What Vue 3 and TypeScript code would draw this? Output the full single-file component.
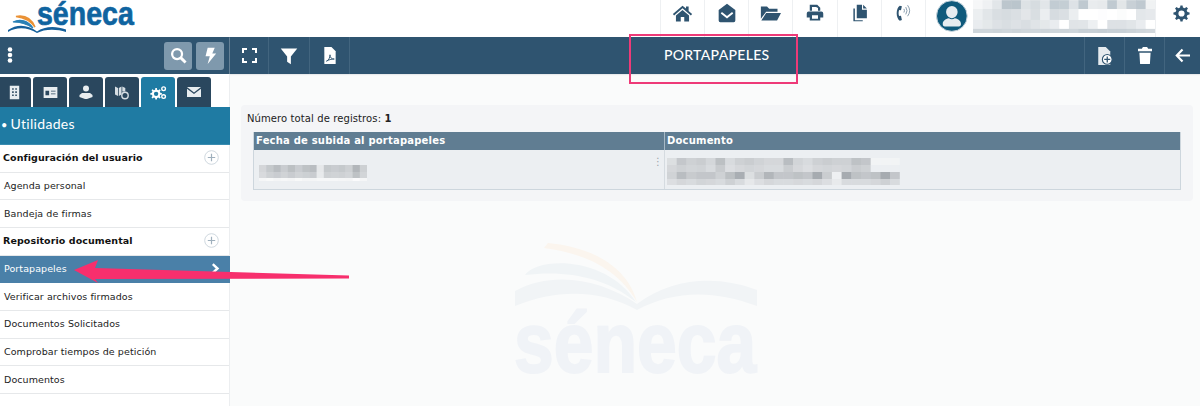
<script setup lang="ts">
interface Rect { x: number; y: number; w: number; h: number; fill: string }

function gear(cx: number, cy: number, ro: number, ri: number, teeth: number): string {
  const pts: string[] = []
  const step = (Math.PI * 2) / teeth
  for (let i = 0; i < teeth; i++) {
    const a = i * step
    const offs: [number, number][] = [[-0.3, ri], [-0.17, ro], [0.17, ro], [0.3, ri]]
    for (const [o, r] of offs) {
      const t = a + o * step
      pts.push(`${(cx + r * Math.cos(t)).toFixed(2)} ${(cy + r * Math.sin(t)).toFixed(2)}`)
    }
  }
  const hole = ro * 0.38
  return `M${pts.join('L')}Z M${cx - hole} ${cy}a${hole} ${hole} 0 1 0 ${hole * 2} 0a${hole} ${hole} 0 1 0 ${-hole * 2} 0Z`
}

function mosaic(rows: string[][], cellW: number, heights: number[]): Rect[] {
  const out: Rect[] = []
  let y = 0
  rows.forEach((row, r) => {
    row.forEach((c, i) => out.push({ x: i * cellW, y, w: cellW + 0.5, h: heights[r] + 0.5, fill: '#' + c }))
    y += heights[r]
  })
  return out
}

const headerIcons: { d: string; w: number }[] = [
  { w: 21, d: 'M12 3 1 12.500l1.400 1.700L12 6l9.600 8.200 1.400-1.700L19 9V4h-3v2.400Z M12 8 4.500 14.400V21H10v-5h4v5h5.500v-6.600Z' },
  { w: 20, d: 'M12 1 2 8.500V21a2 2 0 0 0 2 2h16a2 2 0 0 0 2-2V8.500Z M12 18.500 4.500 12.500l1.400-1.800L12 15.500l6.100-4.800 1.400 1.800Z' },
  { w: 21, d: 'M1 4h7l2.500 2.500H20V10H7L1 18Z M7 11.500h17L19.500 20H1.500Z' },
  { w: 18, d: 'M5 1h10l4 4v4h-3V5h-1.500L14 4H8v5H5Z M3.500 10h17A2.500 2.500 0 0 1 23 12.500V18h-4v4H5v-4H1v-5.500A2.500 2.500 0 0 1 3.500 10Z M8 15v4.500h8V15Z' },
  { w: 18, d: 'M9 1h7v6.500h6.500V19H9Z M17.500 1l5 5h-5Z M6.500 6v15.500H17V23H4.500V6Z' },
]

const userRows = [
  ['f6f7f8', 'eff1f3', 'e2e6e9', 'bcc6cd', 'bac5cc', 'dde2e5', 'd6dce0', 'e2e6e9', 'c2ccd3', 'c4ced4', 'dde2e6', 'bfc9d0', 'e9ecee', 'e7eaec', 'c0cad1', 'e2e6e8', 'c8d0d6', 'bfc9d0', 'f0f2f3'],
  ['eceff1', 'e2e6e9', 'd9dee2', 'd6dce0', 'dadfe3', 'e3e6e9', 'd9dee2', 'ebeef0', 'd6dce0', 'dadfe3', 'ebeef0', 'ffffff', 'ffffff', 'fdfdfe', 'ffffff', 'fbfcfc', 'ffffff', 'e3e7ea', 'e6e9ec'],
  ['e9ecef', 'e4e8ea', 'dde1e5', 'd9dee2', 'dde1e5', 'd9dee2', 'e0e4e7', 'e4e8ea', 'e9ecef', 'ffffff', 'e0e4e7', 'e1e5e8', 'edf0f2', 'ffffff', 'dde1e5', 'dde1e5', 'e1e5e8', 'e9ecef', 'ffffff'],
  ['cfd6db', 'cfd6db', 'cdd4d9', 'cfd6db', 'cdd4d9', 'cfd6db', 'cfd6db', 'cdd4d9', 'cfd6db', 'cdd4d9', 'cfd6db', 'c8d0d6', 'c8d0d6', 'c6ced4', 'c8d0d6', 'c8d0d6', 'ccd3d8', 'cfd6db', 'd2d8dd'],
]
const userCells = mosaic(userRows, 9.68, [9, 11, 9, 4])

const dateRows = [
  ['d4d6d9', 'c5c9cc', 'b9bdc1', 'c9ccd0', 'bcc0c3', 'c9ccd0', 'bec2c5', 'b9bdc1', 'e6e8ea', 'c5c9cc', 'c9ccd0', 'c5c9cc', 'cdd0d3', 'b2b6ba', 'cdd0d3'],
  ['d8dadd', 'ced1d4', 'c9ccd0', 'd0d3d6', 'c9ccd0', 'd0d3d6', 'ccd0d3', 'c9ccd0', 'e8eaec', 'ced1d4', 'd0d3d6', 'ced1d4', 'd2d5d8', 'bec2c5', 'd2d5d8'],
  ['f5f6f7', 'f8f9f9', 'f4f5f6', 'f6f7f8', 'f4f5f6', 'f8f9f9', 'f4f5f6', 'f4f5f6', 'f6f7f8', 'f6f7f8', 'f6f7f8', 'f5f6f7', 'f4f5f6', 'fbfbfc', 'f5f6f7'],
]
const dateCells = mosaic(dateRows, 7.2, [7, 6, 3])

const docRows = [
  ['dcdfe1', 'c4c7cb', 'ced1d4', 'cacdd0', 'd4d7da', 'bcc0c3', 'd8dbde', 'ced1d4', 'cacdd0', 'd0d3d6', 'd5d7da', 'd5d7da', 'b9bdc1', 'd2d5d8', 'd8dbde', 'ced1d4', 'cacdd0', 'ced1d4', 'ced1d4', 'bec2c5', 'c3c6ca', 'f2f4f5', 'f2f4f5', 'f2f4f5', 'eceff2'],
  ['d5d7da', 'ced1d4', 'd2d5d8', 'd0d3d6', 'd8dbde', 'c8cbce', 'dcdee1', 'd6d8db', 'd2d5d8', 'd5d7da', 'd8dbde', 'd8dbde', 'cacdd0', 'd6d8db', 'dcdee1', 'd5d7da', 'd2d5d8', 'd5d7da', 'd2d5d8', 'cacdd0', 'ced1d4', 'eceff2', 'eceff2', 'eceff2', 'eceff2'],
  ['d0d3d6', 'b9bdc1', 'c8cbce', 'c3c6ca', 'c3c6ca', 'ced1d4', 'bcc0c3', 'a9aeb3', 'dcdfe1', 'cacdd0', 'b2b6ba', 'c3c6ca', 'c3c6ca', 'bec2c5', 'c3c6ca', 'a6abb0', 'cacdd0', 'eef0f2', 'a6abb0', 'bec2c5', 'c3c6ca', 'bec2c5', 'a6abb0', 'c3c6ca', 'eceff2'],
  ['dcdee1', 'd5d7da', 'd8dbde', 'd2d5d8', 'd5d7da', 'd8dbde', 'ced1d4', 'd8dbde', 'e6e8ea', 'dcdee1', 'd5d7da', 'd8dbde', 'd8dbde', 'd6d8db', 'd8dbde', 'd5d7da', 'dcdee1', 'e8eaec', 'd8dbde', 'd8dbde', 'd8dbde', 'd5d7da', 'ced1d4', 'd8dbde', 'eceff2'],
]
const docCells = mosaic(docRows, 9.7, [7, 7, 7, 6])

const tabs = [0, 1, 2, 3, 4, 5]

interface MenuItem { label: string; section?: boolean; active?: boolean }
const menu: MenuItem[] = [
  { label: 'Configuración del usuario', section: true },
  { label: 'Agenda personal' },
  { label: 'Bandeja de firmas' },
  { label: 'Repositorio documental', section: true },
  { label: 'Portapapeles', active: true },
  { label: 'Verificar archivos firmados' },
  { label: 'Documentos Solicitados' },
  { label: 'Comprobar tiempos de petición' },
  { label: 'Documentos' },
]

const gearTop = gear(12, 12, 11.5, 8.6, 8)
const cogBig = gear(8.5, 13, 8.500, 6.300, 8)
</script>

<template>
  <div class="page">
    <header class="header">
      <svg class="logo" width="140" height="37" viewBox="0 0 140 37">
        <path d="M16 16.500C24 15 31 18 35 27 30 20 24 17.500 16 16.500Z" fill="#ea9134" stroke="#ea9134" stroke-width="1.500" />
        <path d="M13 22C20 18.500 28 20.500 33 28 27 24 20 22 13 22Z" fill="#2a80b5" stroke="#2a80b5" stroke-width="1.200" />
        <path d="M8 30C17 23.500 28 24.500 37 31.500 44 26 56 25.500 66 29.500V32C56 28.500 44 29 37 33 28 27.500 17 26.500 8 32Z" fill="#15609b" />
        <text transform="translate(37 24.500) scale(.84 1)" class="logo-text">séneca</text>
      </svg>
      <div class="head-spacer"></div>
      <div class="head-btn" v-for="(ic, i) in headerIcons" :key="i">
        <svg :width="ic.w" :height="ic.w" viewBox="0 0 24 24" fill="#2f5470"><path :d="ic.d" fill-rule="evenodd" /></svg>
      </div>
      <div class="head-btn">
        <svg width="22" height="22" viewBox="0 0 24 24" fill="none">
          <path d="M8.500 4C4 7 4 17 8.500 20.500l2.300-1-1-4.500-2 .4C7 13.500 7 10.500 7.800 8.600l2 .4 1-4.500Z" fill="#2f5470" />
          <path d="M13 7.500a4 4 0 0 1 0 4M15 5.500a7 7 0 0 1 0 8M17 3.500a10 10 0 0 1 0 12" stroke="#7f95a6" stroke-width="1" />
        </svg>
      </div>
      <div class="user">
        <svg class="avatar" width="32" height="33" viewBox="0 0 32 33">
          <circle cx="16" cy="16" r="15.500" fill="#0f5a7c" stroke="#c5d3dc" stroke-width="1" />
          <path d="M16 6a5.800 5.800 0 0 1 5.800 5.800c0 3.700-2.600 6.400-5.800 6.400s-5.800-2.700-5.800-6.400A5.800 5.800 0 0 1 16 6Z" fill="#e6ecf0" />
          <path d="M9 26.500c-1.500 0-2.200-1-2.200-2.500 0-3 2.700-5.200 6.200-5.700 1.800 1.300 4.200 1.300 6 0 3.500.5 6.200 2.700 6.200 5.700 0 1.500-.7 2.500-2.200 2.500Z" fill="#e6ecf0" />
        </svg>
        <svg class="user-blur" width="184" height="33" viewBox="0 0 184 33">
          <rect v-for="(c, i) in userCells" :key="i" :x="c.x" :y="c.y" :width="c.w" :height="c.h" :fill="c.fill" />
        </svg>
      </div>
      <div class="head-gear">
        <svg width="17" height="17" viewBox="0 0 24 24" fill="#2f5470"><path :d="gearTop" fill-rule="evenodd" /></svg>
      </div>
    </header>

    <div class="workspace">
      <aside class="sidebar">
        <div class="side-bar">
          <svg class="dots" width="6" height="16" viewBox="0 0 6 16" fill="#fff">
            <circle cx="3" cy="2.500" r="2.300" /><circle cx="3" cy="8" r="2.300" /><circle cx="3" cy="13.500" r="2.300" />
          </svg>
          <div class="side-actions">
            <div class="side-action">
              <svg width="17" height="17" viewBox="0 0 24 24" fill="none" stroke="#fff"><circle cx="10" cy="10" r="7" stroke-width="3.200" /><path d="M15 15l7 7" stroke-width="4" /></svg>
            </div>
            <div class="side-action">
              <svg width="17" height="19" viewBox="0 0 24 24" fill="#fff"><path d="M8 1h10l-3.500 8H20L8 24l3-11H5Z" /></svg>
            </div>
          </div>
        </div>

        <nav class="tabs">
          <div class="tab" v-for="t in tabs" :key="t" :class="{ on: t === 4 }">
            <svg v-if="t === 0" width="11" height="15" viewBox="0 0 14 17" fill="#e8edf0">
              <path fill-rule="evenodd" d="M1 0h12v17H1Z M4 3v2h2V3Z M8 3v2h2V3Z M4 7v2h2V7Z M8 7v2h2V7Z M4 11v2h2v-2Z M8 11v2h2v-2Z" />
            </svg>
            <svg v-else-if="t === 1" width="15" height="11" viewBox="0 0 15 12" fill="#e8edf0">
              <path fill-rule="evenodd" d="M0 0h15v12H0Z M2 4v5h4V4Z M8 4v1h5V4Z M8 7v1h5V7Z" />
            </svg>
            <svg v-else-if="t === 2" width="14" height="14" viewBox="0 0 14 14" fill="#e8edf0">
              <circle cx="7" cy="3.500" r="3" /><path d="M3 8h8l2.500 2v2L8 14H6L.5 12v-2Z" />
            </svg>
            <svg v-else-if="t === 3" width="14" height="15" viewBox="0 0 14 14">
              <path d="M0 1l3 1.500v8L0 9Z M3.800 2.500 6.500 1v8L3.800 10.500Z M7.300 1l3 1.500V6H7.300Z" fill="#d5dde3" />
              <circle cx="10" cy="10" r="3.200" fill="none" stroke="#d5dde3" stroke-width="1.400" />
            </svg>
            <svg v-else-if="t === 4" width="17" height="15" viewBox="0 0 24 22" fill="#fff">
              <path :d="cogBig" fill-rule="evenodd" />
              <circle cx="19.500" cy="5.500" r="2.700" fill="none" stroke="#fff" stroke-width="2" />
              <circle cx="19.500" cy="17" r="2.700" fill="none" stroke="#fff" stroke-width="2" />
            </svg>
            <svg v-else width="14" height="10" viewBox="0 0 14 10" fill="#e8edf0">
              <path d="M0 0h14L7 5.500Z M0 1.800 7 7l7-5.200V10H0Z" />
            </svg>
          </div>
        </nav>

        <div class="section-title"><span class="bullet">•</span> Utilidades</div>

        <ul class="menu">
          <li v-for="m in menu" :key="m.label" :class="{ section: m.section, active: m.active }">
            <span>{{ m.label }}</span>
            <svg v-if="m.section" class="plus" width="15" height="15" viewBox="0 0 15 15" fill="none">
              <circle cx="7.500" cy="7.500" r="6.800" stroke="#cfd8df" stroke-width="1" />
              <path d="M7.500 3.800v7.400M3.800 7.500h7.400" stroke="#9fb0bd" stroke-width="1.200" />
            </svg>
            <svg v-if="m.active" class="chev" width="9" height="11" viewBox="0 0 9 11" fill="none">
              <path d="M1.800 1.200 6.500 5.500 1.800 9.800" stroke="#fff" stroke-width="2.400" />
            </svg>
          </li>
        </ul>
      </aside>

      <div class="content">
        <div class="toolbar">
          <div class="tool-group">
            <div class="tool">
              <svg width="15" height="15" viewBox="0 0 15 15" fill="none" stroke="#fff" stroke-width="2">
                <path d="M1 5V1h4M10 1h4v4M14 10v4h-4M5 14H1v-4" />
              </svg>
            </div>
            <div class="tool wide">
              <svg width="18" height="18" viewBox="0 0 24 24" fill="#fff"><path d="M1 2h22l-8.500 10.500V23l-5-3.500v-7Z" /></svg>
            </div>
            <div class="tool wide">
              <svg width="14" height="17" viewBox="0 0 18 24">
                <path d="M1 0h10l6 6v18H1Z" fill="#fff" />
                <path d="M4 20c3-1 5-5 5-9 0 4 2 6 6 6-4 0-8 1-11 3Z" fill="none" stroke="#2f5470" stroke-width="1.300" />
              </svg>
            </div>
          </div>
          <h1 class="page-title">PORTAPAPELES</h1>
          <div class="tool-group">
            <div class="tool line">
              <svg width="16" height="18" viewBox="0 0 20 24">
                <path d="M1 0h10l6 6v18H1Z" fill="#e6ebef" />
                <circle cx="13" cy="16.500" r="6.500" fill="#fff" stroke="#2f5470" stroke-width="1.500" />
                <path d="M13 12.500v8M9 16.500h8" stroke="#2f5470" stroke-width="1.700" />
              </svg>
            </div>
            <div class="tool line">
              <svg width="14" height="17" viewBox="0 0 20 24" fill="#fff"><path d="M7 0h6l1.500 2.500H20V6H0V2.500h5.500Z M2 8h16l-1 16H3Z" /></svg>
            </div>
            <div class="tool line last">
              <svg width="15" height="15" viewBox="0 0 15 15" fill="none" stroke="#fff" stroke-width="2.200">
                <path d="M7.500 1.500 1.800 7.500l5.700 6M2 7.500h13" />
              </svg>
            </div>
          </div>
        </div>

        <main class="main">
          <section class="panel">
            <p class="total">Número total de registros: <b>1</b></p>
            <div class="table">
              <div class="thead">
                <div class="th first">Fecha de subida al portapapeles</div>
                <div class="th">Documento</div>
              </div>
              <div class="tbody">
                <div class="td first">
                  <svg class="date-blur" width="108" height="16" viewBox="0 0 108 16">
                    <rect v-for="(c, i) in dateCells" :key="i" :x="c.x" :y="c.y" :width="c.w" :height="c.h" :fill="c.fill" />
                  </svg>
                  <span class="grip">⋮</span>
                </div>
                <div class="td">
                  <svg class="doc-blur" width="242" height="27" viewBox="0 0 242 27">
                    <rect v-for="(c, i) in docCells" :key="i" :x="c.x" :y="c.y" :width="c.w" :height="c.h" :fill="c.fill" />
                  </svg>
                </div>
              </div>
            </div>
          </section>

          <svg class="watermark" width="246" height="156" viewBox="0 0 246 156">
            <path d="M34 3C70 6 112 22 123 62 104 30 74 14 30 8Z" fill="#fbf5ee" />
            <path d="M11 35C22 18 90 14 122 62 90 36 50 30 11 35Z" fill="#f0f4f6" />
            <path d="M1 51C40 30 88 40 123 64 160 36 206 36 243 50V66C200 50 160 50 123 70 88 50 44 48 1 66Z" fill="#f1f4f6" />
            <text transform="translate(0 132) scale(.84 1)" class="wm-text">séneca</text>
          </svg>
        </main>
      </div>
    </div>

    <div class="callout"></div>
    <svg class="arrow" width="290" height="30" viewBox="0 0 290 30">
      <path d="M2 14 26 4 23 12 277 19.500V22.500L23 23 26 27Z" fill="#f72f6d" />
    </svg>
  </div>
</template>

<style scoped>
.page {
  position: relative;
  width: 1200px;
  height: 406px;
  overflow: hidden;
  background: #fff;
  font-family: "DejaVu Sans", sans-serif;
  color: #1c1c1c;
}
.header {
  display: flex;
  height: 37px;
  background: #fff;
}
.logo { flex: none; overflow: visible; }
.head-spacer { flex: 1; }
.head-btn {
  width: 44.200px;
  display: flex;
  align-items: center;
  justify-content: center;
  padding-bottom: 11px;
  box-sizing: border-box;
  border-left: 1px solid #eef0f2;
}
.user {
  width: 231px;
  box-sizing: border-box;
  display: flex;
  align-items: flex-start;
  border-left: 1px solid #eef0f2;
  border-right: 1px solid #eef0f2;
  padding-left: 10px;
}
.user-blur { margin-left: 5px; filter: blur(.5px); }
.head-gear {
  width: 44px;
  display: flex;
  justify-content: center;
  padding: 5px 0 0 7px;
  box-sizing: border-box;
}
.workspace {
  display: flex;
  height: 369px;
}
.sidebar {
  width: 230px;
  flex: none;
  background: #fff;
  border-right: 1px solid #eceef0;
  box-sizing: border-box;
}
.side-bar {
  height: 37px;
  background: #2f5470;
  border-right: 1px solid #4c6c85;
  margin-right: -1px;
  display: flex;
  align-items: center;
  justify-content: space-between;
  padding: 0 5px 0 7px;
}
.dots { margin-top: -1px; }
.side-actions { display: flex; gap: 4px; }
.side-action {
  width: 28px;
  height: 28px;
  border-radius: 3px;
  background: #7f99ad;
  display: flex;
  align-items: center;
  justify-content: center;
}
.tabs {
  display: flex;
  gap: 2px;
  height: 31px;
  margin: 2px 0 0 -3px;
  overflow: hidden;
  align-items: flex-end;
}
.tab {
  width: 34px;
  height: 30px;
  flex: none;
  border-radius: 3px 3px 0 0;
  background: #2a475e;
  display: flex;
  align-items: center;
  justify-content: center;
}
.tab.on { background: #1f7ba3; }
.section-title {
  height: 38px;
  margin-right: -1px;
  background: #1f7ba3;
  color: #fff;
  font: 400 14px/34px Lato, sans-serif;
  letter-spacing: .3px;
  word-spacing: -1px;
  padding-left: 1px;
  border-bottom: 1px solid #3a8cb0;
  box-sizing: border-box;
}
.bullet { font-size: 11px; }
.menu {
  list-style: none;
  margin: 0;
  padding: 0;
}
.menu li {
  height: 27.670px;
  box-sizing: border-box;
  display: flex;
  align-items: center;
  justify-content: space-between;
  font-size: 9.500px;
  letter-spacing: .08px;
  padding: 0 10px 1px 4px;
  border-bottom: 1px solid #e6e8ea;
  color: #222;
}
.menu li.section {
  font-weight: 700;
  padding-left: 3px;
  color: #111;
}
.menu li.active {
  background: #4a80a8;
  color: #fff;
  margin-right: -1px;
  border-bottom: none;
}
.content {
  flex: 1;
  min-width: 0;
  display: flex;
  flex-direction: column;
}
.toolbar {
  height: 37px;
  background: #2f5470;
  display: flex;
  justify-content: space-between;
  align-items: stretch;
  position: relative;
  box-shadow: 0 1px 1px #e8eaec;
}
.tool-group { display: flex; }
.tool {
  width: 39px;
  box-sizing: border-box;
  display: flex;
  align-items: center;
  justify-content: center;
  border-right: 1px solid #42657f;
}
.tool.wide { width: 41px; }
.tool.wide:last-child { width: 40px; }
.tool.line { width: 40px; border-right: none; border-left: 1px solid #42657f; }
.tool.line.last { width: 36px; }
.page-title {
  margin: 0;
  color: #fff;
  font: 500 14px/36px Lato, sans-serif;
  letter-spacing: .3px;
  position: absolute;
  left: 434px;
}
.main {
  flex: 1;
  background: #fafbfb;
  padding: 31px 7px 0 11px;
}
.panel {
  height: 96px;
  background: #f4f5f7;
  border-radius: 4px;
  padding: 7px 12px 0 6px;
  box-sizing: border-box;
}
.total {
  margin: 0;
  font-size: 10px;
  line-height: 13px;
  letter-spacing: .1px;
  color: #222;
}
.table {
  margin: 7px 0 0 6px;
  border: 1px solid #cdd6dd;
  border-top: none;
}
.thead {
  display: grid;
  grid-template-columns: 411px 1fr;
  background: #607d92;
  height: 18px;
  color: #fff;
  font-size: 10px;
  font-weight: 700;
  line-height: 18px;
  letter-spacing: .2px;
}
.th { padding-left: 2px; }
.th.first { border-right: 1px solid #a7b9c6; }
.tbody {
  display: grid;
  grid-template-columns: 411px 1fr;
  height: 39px;
  background: #eceff2;
}
.td { position: relative; }
.td.first { border-right: 1px solid #d5dbe0; }
.date-blur { position: absolute; left: 5px; top: 15px; filter: blur(.5px); }
.doc-blur { position: absolute; left: 2px; top: 8px; filter: blur(.5px); }
.grip {
  position: absolute;
  right: 1px;
  top: 6px;
  font-size: 10px;
  line-height: 12px;
  color: #9aa3aa;
}
.watermark {
  display: block;
  margin: 39px 0 0 273px;
}
.logo-text {
  font: 700 34px "Liberation Sans", sans-serif;
  fill: #0f64a0;
  stroke: #0f64a0;
  stroke-width: .7px;
}
.wm-text {
  font: 700 85px "Liberation Sans", sans-serif;
  fill: #f0f3f7;
  stroke: #f0f3f7;
  stroke-width: 2px;
}
.callout {
  position: absolute;
  left: 629px;
  top: 34px;
  width: 169px;
  height: 50px;
  box-sizing: border-box;
  border: 2px solid #ee3a78;
}
.arrow {
  position: absolute;
  left: 72px;
  top: 256px;
}
</style>
